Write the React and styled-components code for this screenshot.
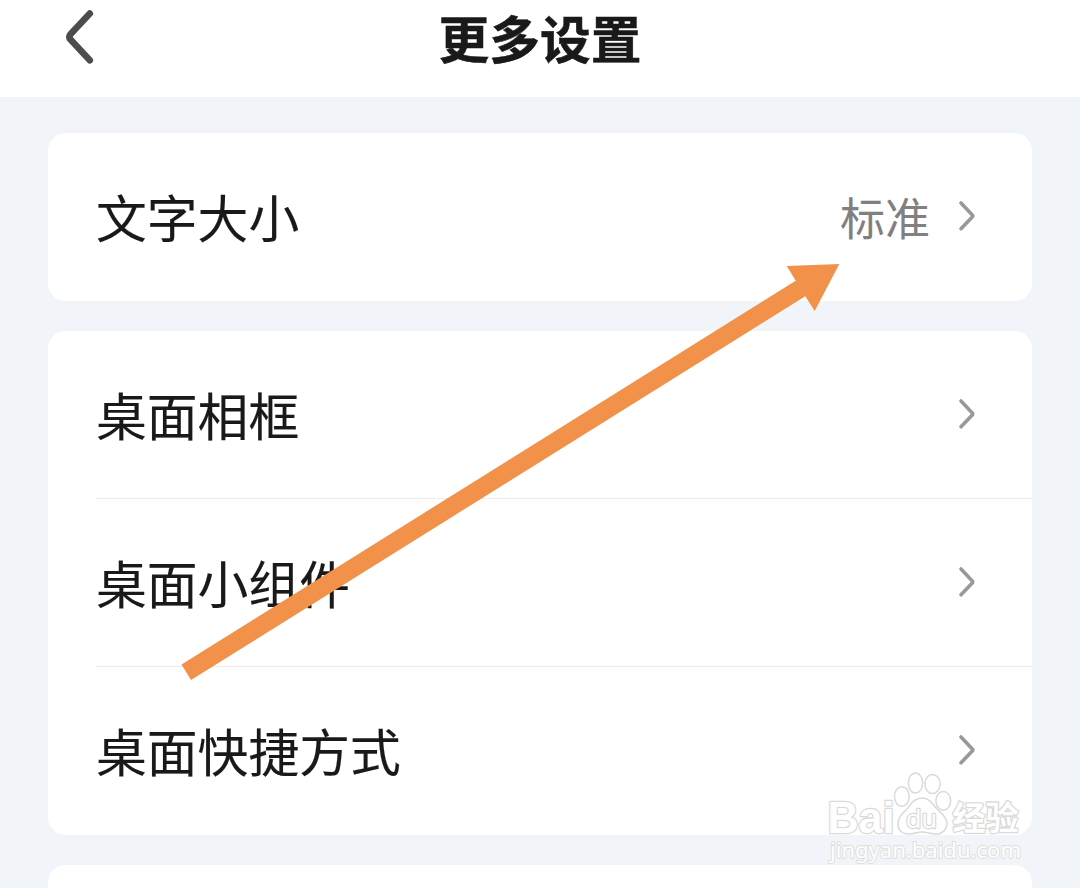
import React from "react"
import styled, { createGlobalStyle } from "styled-components"

const GlobalStyle = createGlobalStyle`
  * {
    box-sizing: border-box;
  }

  body {
    margin: 0;
    background: #f1f5fa;
    color: #191919;
    font-family: "Noto Sans CJK SC", sans-serif;
  }
`

const Screen = styled.div`
  position: relative;
  height: 888px;
  overflow: hidden;
`

const Header = styled.header`
  display: grid;
  grid-template-columns: 160px 1fr 160px;
  height: 97px;
  background: #fff;
`

const BackButton = styled.button`
  display: flex;
  height: 74px;
  padding: 8px 0 0 62px;
  border: 0;
  background: none;
`

const Title = styled.h1`
  margin: 0;
  font-size: 50.7px;
  font-weight: 700;
  line-height: 75px;
  text-align: center;
  -webkit-text-stroke: 0.5px currentColor;
`

const List = styled.main`
  display: flex;
  flex-direction: column;
  gap: 30px;
  padding: 36px 48px 0;
`

const Card = styled.section`
  display: flex;
  flex-direction: column;
  min-height: 168px;
  padding-left: 48px;
  border-radius: 18px;
  background: #fff;
`

const Row = styled.div`
  display: flex;
  align-items: center;
  height: 168px;
  padding: 0 56px 2px 0;
  border-bottom: ${p => (p.$divided ? "1px solid #ebebeb" : "0")};
`

const Label = styled.span`
  flex: 1;
  font-size: 50.8px;
  line-height: 74px;
  -webkit-text-stroke: 0.15px currentColor;
`

const Value = styled.span`
  margin-right: 28px;
  padding-top: 2px;
  color: #808080;
  font-size: 45px;
  line-height: 66px;
`

const ArrowOverlay = styled.svg`
  position: absolute;
  inset: 0;
  pointer-events: none;
`

const Watermark = styled.div`
  position: absolute;
  top: 768px;
  left: 824px;
  width: 204px;
  height: 100px;
  pointer-events: none;
`

const Stamp = styled.svg`
  display: block;

  text {
    fill: #fff;
    stroke: #dadada;
    stroke-width: 2.6px;
    stroke-linejoin: round;
    paint-order: stroke;
  }

  .thin {
    stroke: #dedede;
    stroke-width: 2px;
  }
`

const groups = [
  [{ label: "文字大小", value: "标准" }],
  [{ label: "桌面相框" }, { label: "桌面小组件" }, { label: "桌面快捷方式" }],
  [],
]

const BackIcon = () => (
  <svg width="36" height="60" viewBox="0 0 36 60" fill="none">
    <path
      d="M27.8 5.6L8.7 25.9Q6 28.9 8.7 31.8L27.8 52.3"
      stroke="#4c4c4c"
      strokeWidth="6.6"
      strokeLinecap="round"
      strokeLinejoin="round"
    />
  </svg>
)

const Chevron = () => (
  <svg width="18" height="32" viewBox="0 0 18 32" fill="none">
    <path
      d="M3 3L14.5 15.2Q15.1 16 14.5 16.8L3 28.8"
      stroke="#999"
      strokeWidth="3.6"
      strokeLinecap="round"
      strokeLinejoin="round"
    />
  </svg>
)

const PointerArrow = () => (
  <ArrowOverlay width="1080" height="888" viewBox="0 0 1080 888">
    <polygon
      points="181.5,664.5 795.7,280.7 786.7,266 839.3,264 814.7,311 805.3,296.3 191,680"
      fill="#f2924a"
    />
  </ArrowOverlay>
)

const BaiduMark = () => (
  <Watermark>
    <Stamp width="204" height="100" viewBox="0 0 204 100">
      <g fill="#fff" stroke="#dadada" strokeWidth="1.5">
        <ellipse cx="77.8" cy="28.5" rx="7.4" ry="9.8" />
        <ellipse cx="91.5" cy="15" rx="7.2" ry="10" />
        <ellipse cx="108.5" cy="16" rx="7.6" ry="9.6" />
        <ellipse cx="119.3" cy="32.8" rx="7.4" ry="9.4" />
        <path d="M98 30C90 30 87 36 83 41C78 46 74 49 74 56C74 63 79 66 85 66C90 66 93 64 98 64C103 64 107 66 112 66C118 66 123 62 123 55C123 49 117 45 113 41C108 36 106 30 98 30Z" />
      </g>
      <text x="3.5" y="64.5" fontFamily="Liberation Sans" fontWeight="700" fontSize="45" textLength="67" lengthAdjust="spacingAndGlyphs">Bai</text>
      <text x="82" y="60" fontFamily="Open Sans" fontWeight="400" fontSize="26" textLength="31" lengthAdjust="spacingAndGlyphs">du</text>
      <text x="128.5" y="61.5" fontFamily="Noto Sans CJK SC" fontWeight="700" fontSize="33">经验</text>
      <text className="thin" x="6" y="90" fontFamily="Noto Sans" fontSize="22.5" textLength="191" lengthAdjust="spacingAndGlyphs">jingyan.baidu.com</text>
    </Stamp>
  </Watermark>
)

const App = () => (
  <Screen>
    <GlobalStyle />
    <Header>
      <BackButton aria-label="返回">
        <BackIcon />
      </BackButton>
      <Title>更多设置</Title>
    </Header>
    <List>
      {groups.map((rows, i) => (
        <Card key={i}>
          {rows.map(({ label, value }, j) => (
            <Row key={label} $divided={j < rows.length - 1}>
              <Label>{label}</Label>
              {value && <Value>{value}</Value>}
              <Chevron />
            </Row>
          ))}
        </Card>
      ))}
    </List>
    <PointerArrow />
    <BaiduMark />
  </Screen>
)

export default App
